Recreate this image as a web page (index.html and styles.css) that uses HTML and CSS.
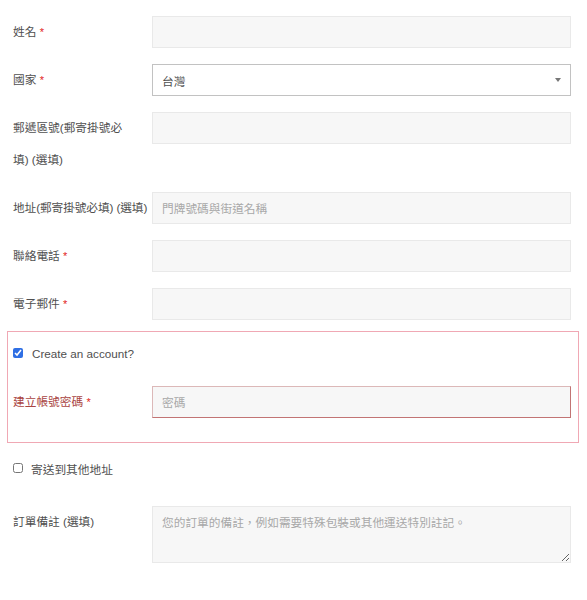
FILE: index.html
```html
<!DOCTYPE html>
<html lang="zh-Hant">
<head>
    <meta charset="UTF-8">
    <meta name="viewport" content="width=device-width, initial-scale=1.0">
    <title>結帳</title>
    <link rel="stylesheet" href="styles.css">
</head>
<body>
    <form class="checkout">
        <div class="row">
            <label class="label">姓名 <abbr class="req">*</abbr></label>
            <div class="field"><input type="text" class="input"></div>
        </div>

        <div class="row">
            <label class="label">國家 <abbr class="req">*</abbr></label>
            <div class="field">
                <div class="select">
                    <span>台灣</span>
                    <span class="arrow"></span>
                </div>
            </div>
        </div>

        <div class="row">
            <label class="label">郵遞區號(郵寄掛號必<br>填) (選填)</label>
            <div class="field"><input type="text" class="input"></div>
        </div>

        <div class="row">
            <label class="label nowrap">地址(郵寄掛號必填) (選填)</label>
            <div class="field"><input type="text" class="input" placeholder="門牌號碼與街道名稱"></div>
        </div>

        <div class="row">
            <label class="label">聯絡電話 <abbr class="req">*</abbr></label>
            <div class="field"><input type="text" class="input"></div>
        </div>

        <div class="row row-last">
            <label class="label">電子郵件 <abbr class="req">*</abbr></label>
            <div class="field"><input type="text" class="input"></div>
        </div>

        <!-- account box, shown as invalid -->
        <div class="account-box">
            <label class="check-row">
                <input type="checkbox" class="check" checked>
                <span class="check-text">Create an account?</span>
            </label>
            <div class="row">
                <label class="label invalid">建立帳號密碼 <abbr class="req">*</abbr></label>
                <div class="field"><input type="password" class="input input-invalid" placeholder="密碼"></div>
            </div>
        </div>

        <label class="check-row ship-row">
            <input type="checkbox" class="check">
            <span class="ship-text">寄送到其他地址</span>
        </label>

        <div class="row">
            <label class="label">訂單備註 (選填)</label>
            <div class="field">
                <textarea class="input notes" placeholder="您的訂單的備註，例如需要特殊包裝或其他運送特別註記。"></textarea>
            </div>
        </div>
    </form>
</body>
</html>
```

FILE: styles.css
```css
* {
    margin: 0;
    padding: 0;
    box-sizing: border-box;
}

body {
    background-color: #ffffff;
    color: #4f4f4f;
    font-family: 'Liberation Sans', 'Noto Sans CJK TC', sans-serif;
    font-size: 11.7px;
}

.checkout {
    padding: 16px 16px 0 13px;
}

.row {
    display: flex;
    align-items: flex-start;
    margin-bottom: 16px;
}

.row-last {
    margin-bottom: 11px;
}

.label {
    width: 139px;
    flex-shrink: 0;
    line-height: 32px;
    color: #4f4f4f;
}

.label.nowrap {
    white-space: nowrap;
    letter-spacing: -0.1px;
}

.label.invalid {
    color: #a94442;
}

.req {
    color: #e2231a;
    text-decoration: none;
    border: none;
    font-weight: normal;
    font-size: 11px;
}

.field {
    flex: 1;
}

.input {
    display: block;
    width: 100%;
    height: 32px;
    padding: 0 9px;
    background-color: #f7f7f7;
    border: 1px solid #e9e9e9;
    color: #4f4f4f;
    font-family: 'Liberation Sans', 'Noto Sans CJK TC', sans-serif;
    font-size: 11.7px;
    outline: none;
}

.input::placeholder {
    color: #a8a8a8;
}

.select {
    height: 32px;
    display: flex;
    align-items: center;
    justify-content: space-between;
    padding: 0 9px;
    background-color: #ffffff;
    border: 1px solid #c2c2c2;
    color: #4f4f4f;
}

.arrow {
    width: 0;
    height: 0;
    border-left: 3px solid transparent;
    border-right: 3px solid transparent;
    border-top: 4px solid #777;
    margin-right: 0;
}

/* Create account block */
.account-box {
    margin: 0 -8px 0 -6px;
    padding: 5px 7px 0 5px;
    border: 1px solid #f0a8b4;
}

.account-box .row {
    margin-top: 17px;
    margin-bottom: 24px;
}

.input-invalid {
    border-color: #dcb8b8 #c27474 #c27474 #dcb8b8;
}

.check-row {
    display: flex;
    align-items: center;
    height: 32px;
}

.check {
    width: 10px;
    height: 10px;
    margin: 0;
    accent-color: #2f6fe4;
    flex-shrink: 0;
}

.check-text {
    margin-left: 9px;
    color: #4f4f4f;
}

.ship-row {
    margin-top: 9px;
    margin-bottom: 22px;
}

.ship-text {
    margin-left: 8px;
}

.notes {
    height: 57px;
    padding: 8px 9px;
    line-height: 16px;
    resize: vertical;
}
```
